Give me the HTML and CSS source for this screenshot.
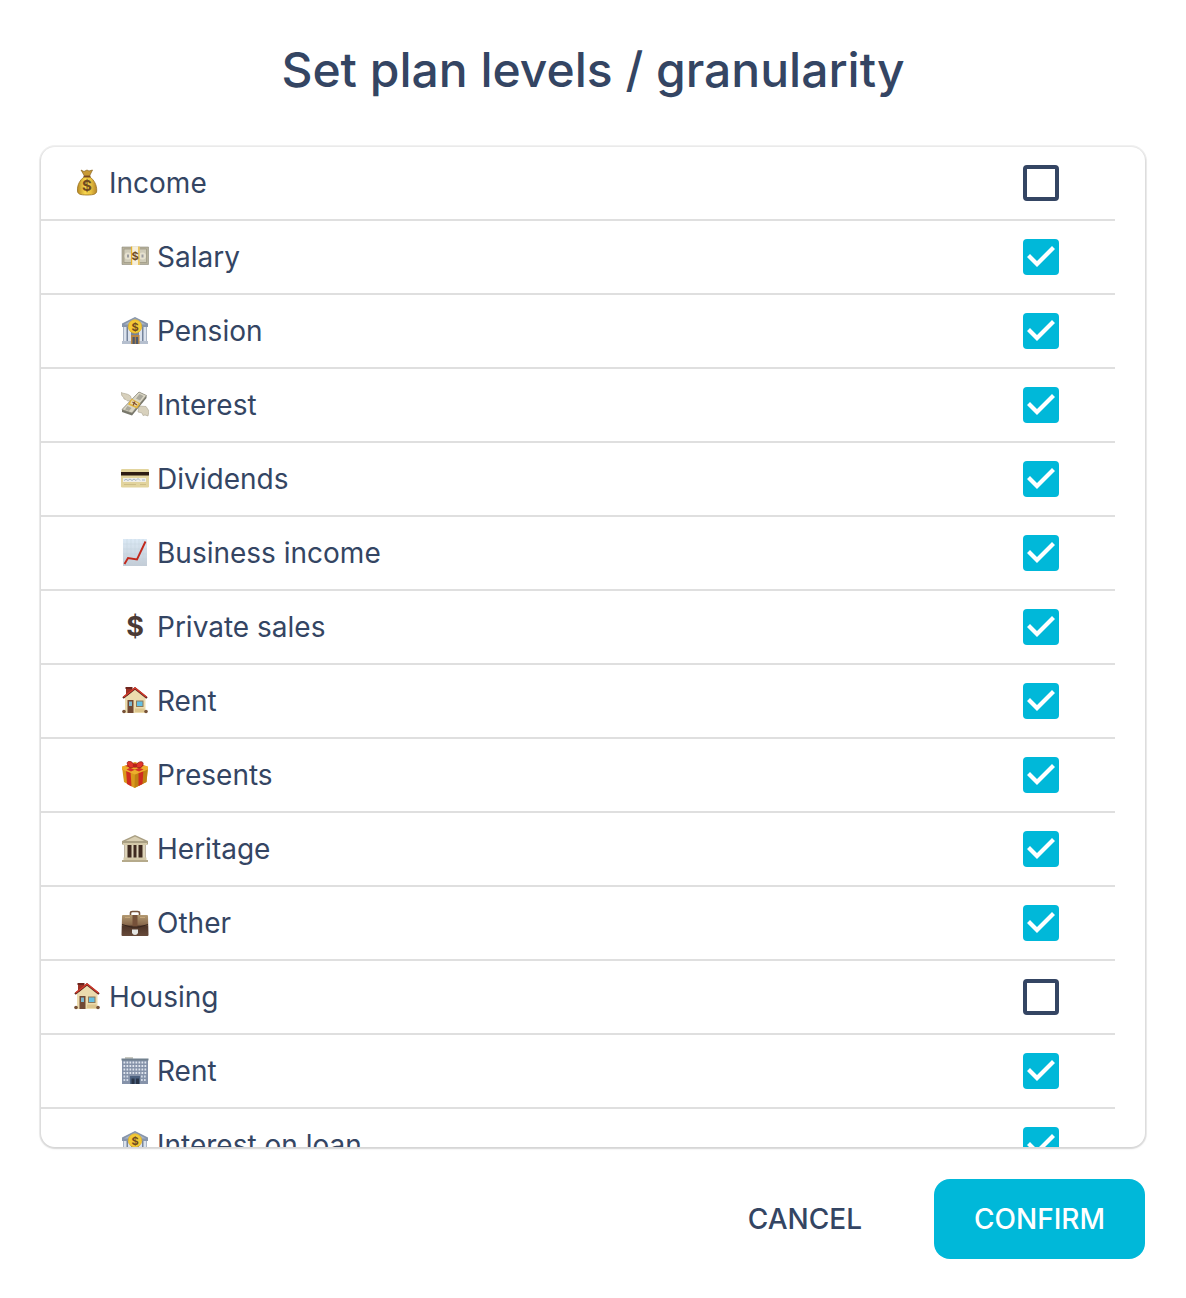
FILE: index.html
```html
<!DOCTYPE html>
<html lang="en">
	<head>
		<meta charset="utf-8">
		<meta name="viewport" content="width=device-width, initial-scale=1">
		<title>Set plan levels / granularity</title>
		<link rel="stylesheet" href="styles.css">
	</head>
	<body>
		<!-- gradients stay rendered, display: none would switch them off -->
		<svg class="gradients" aria-hidden="true">
			<linearGradient id="gold" x1="0" x2="1" y1="0" y2="0">
				<stop offset="0" stop-color="#b98a24"/>
				<stop offset=".4" stop-color="#f8d850"/>
				<stop offset=".7" stop-color="#e9c03f"/>
				<stop offset="1" stop-color="#b5862a"/>
			</linearGradient>
			<linearGradient id="leather" x1="0" x2="0" y1="0" y2="1">
				<stop offset="0" stop-color="#b39a72"/>
				<stop offset=".45" stop-color="#8a6a4d"/>
				<stop offset=".55" stop-color="#4f3528"/>
				<stop offset="1" stop-color="#664a3a"/>
			</linearGradient>
			<linearGradient id="paper" x1="0" x2="0" y1="0" y2="1">
				<stop offset="0" stop-color="#dbe9f5"/>
				<stop offset="1" stop-color="#c3ccd6"/>
			</linearGradient>
		</svg>
		<!-- category icons -->
		<svg class="sprite" aria-hidden="true">
			<symbol id="bag" viewBox="0 0 28 28">
				<path d="M8 1l3 1.500 3-1.500 2 1 3.500-1-3 6h-5z" fill="#c99a35" stroke="#8a6420" stroke-width=".7"/>
				<path d="M11 8C7 11 4 16 4.500 22c.2 3 2.500 4 9.500 4s9.500-1 9.700-4C24 16 21 11 17 8z" fill="url(#gold)" stroke="#99701f" stroke-width=".8"/>
				<path d="M10.500 7.500h7" stroke="#7b4a22" stroke-width="1.600"/>
				<text x="14" y="22" text-anchor="middle" class="coin-sign coin-sign-big">$</text>
			</symbol>
			<symbol id="cash" viewBox="0 0 28 28">
				<path d="M1 4h26.500v17.500H1z" fill="#b8b39d" stroke="#8d8a7b" stroke-width=".6"/>
				<path d="M3 6h22.500v13.500H3z" fill="#cfcbb8" stroke="#99947f" stroke-width=".7"/>
				<circle cx="7" cy="13" r="3.500" fill="#e6e1cf"/>
				<circle cx="21.500" cy="13" r="3.500" fill="#e6e1cf"/>
				<path d="M6 11.500h2v3H6zM20.500 11.500h2v3h-2z" fill="#9c9da0"/>
				<path d="M10 3.500h8.500V22H10z" fill="#f6efdc"/>
				<path d="M10 3.500h1.200V22H10zM17.300 3.500h1.200V22h-1.200z" fill="#e8b52d"/>
				<text x="14" y="17" text-anchor="middle" class="coin-sign">$</text>
			</symbol>
			<symbol id="bank" viewBox="0 0 28 28">
				<path d="M14 0l13 6.500V10H1V6.500z" fill="#8795ab"/>
				<path d="M14 1.500L25 7.500H3z" fill="#a9b5c6"/>
				<path d="M2 10h24v15H2z" fill="#75849c"/>
				<path d="M2.500 10h3v14h-3zM7 10h3v14H7zM18 10h3v14h-3zM22.500 10h3v14h-3z" fill="#dbe2ec"/>
				<path d="M1 24h26v3H1z" fill="#b5bfce"/>
				<path d="M10 18h8.500v9H10z" fill="#b98642"/>
				<path d="M11.500 20h2.300v7h-2.300zM14.800 20h2.300v7h-2.300z" fill="#4c596d"/>
				<circle cx="14" cy="9.500" r="6.800" fill="#f3c935" stroke="#dba81f" stroke-width=".6"/>
				<text x="14" y="13.500" text-anchor="middle" class="coin-sign">$</text>
			</symbol>
			<symbol id="flying" viewBox="0 0 28 28">
				<path d="M0 1.500c3 1.500 6 .5 9.500 3.500L11 10H6.500L5 8.500 3 8 2.500 6 1 5zM18 15l7 .5L28 20l-1 5-3-1-2 .500-1-2.500-4-1z" fill="#d8d1bd" stroke="#aaa28e" stroke-width=".6"/>
				<path d="M18 1l7.500 3.500v2.500L11 24.500 1 21v-2.500z" fill="#77766a"/>
				<path d="M18 1l7.500 3.500L11 22 1 18.500z" fill="#dad6c5" stroke="#8c897b" stroke-width=".7"/>
				<path d="M18.500 3l4 2-3.500 4.500-4-2zM6.500 15l4 2-2.500 3-4-1.500z" fill="#aaa89b"/>
				<path d="M10.500 7.500l9 5-3.500 5-9-4z" fill="#e3b53d"/>
				<path d="M11 9l6.500 3.500-2 3-6.500-3z" fill="#e8d7ac"/>
				<path d="M11.500 11l4.500 3M14 10.500l-2 4" stroke="#81502f" stroke-width="1.200"/>
			</symbol>
			<symbol id="card" viewBox="0 0 28 28">
				<rect y="4" width="28" height="18.500" rx="1.200" fill="#e2d49d"/>
				<path d="M0 7h28v3.500H0z" fill="#2c1b12"/>
				<path d="M2 13h23v4H2z" fill="#f1efe8"/>
				<path d="M3 15.500l2-1.200 2 1.200 2-1.500 2 1.500 2-1.500 2 1.500 2-2 2 2M21 15h3" fill="none" stroke="#8fa5bd" stroke-width=".8"/>
				<path d="M3 19.500h12M19 19.500h6" stroke="#cdbd86"/>
			</symbol>
			<symbol id="chart" viewBox="0 0 28 28">
				<path d="M2 0h24v27H2z" fill="url(#paper)"/>
				<path d="M6 0v27M10 0v27M14 0v27M18 0v27M22 0v27M2 5h24M2 10h24M2 15h24M2 20h24" stroke="#c3d0dc" stroke-width=".4"/>
				<path d="M3.500 25l3.500-6 9 1.500L24.500 2.500" fill="none" stroke="#c2281c" stroke-width="1.900"/>
			</symbol>
			<symbol id="dollar" viewBox="0 0 28 28">
				<text x="14" y="23" text-anchor="middle" class="dollar-sign">$</text>
			</symbol>
			<symbol id="house" viewBox="0 0 28 28">
				<path d="M5 0h6v9H5z" fill="#9c3024"/>
				<path d="M4.500 0h7v2h-7z" fill="#6d241d"/>
				<path d="M14 2L4 10.500V26h20.500V10.500z" fill="#ecdcae"/>
				<path d="M2 11L14 1.500 26 11" fill="none" stroke="#5c241e" stroke-width="2.200"/>
				<path d="M2.500 10L14 1l11.500 9" fill="none" stroke="#d53a2b" stroke-width="1.500"/>
				<path d="M6.500 13h6v13h-6z" fill="#704833"/>
				<path d="M8 14.500h3V19H8z" fill="#7cb7cf"/>
				<path d="M15 13.500h7.500V20H15z" fill="#8c795a"/>
				<path d="M16 14.500h5.500V19H16z" fill="#63bfe3"/>
				<path d="M14 21.500h9.500V25H14z" fill="#dcc58d"/>
				<circle cx="3" cy="24.500" r="1.800" fill="#765238"/>
				<circle cx="25" cy="24.500" r="1.800" fill="#765238"/>
			</symbol>
			<symbol id="gift" viewBox="0 0 28 28">
				<path d="M1 6l13-5 13 5-1.500 15L13.500 27 3 21z" fill="#d99a1c"/>
				<path d="M14 10l13-4-1.500 15-12 6z" fill="#c08212"/>
				<path d="M5 8l4.500 1.500 1 16L6 23zM17.500 9l5-1.500L21.500 23l-4 2z" fill="#cf2c20"/>
				<path d="M1 5.500l13-4 13 4v3l-13 5-13-5z" fill="#edaf2c"/>
				<path d="M4.500 5l5-2 13 5.500-4.500 2zM23 4.500l-5-2L5.500 8.500 10 10.500z" fill="#d63226"/>
				<path d="M14 5C10-2 5 0 6.500 3.500S10 8 14 5c4-6 9-5 8-1.500S18 8 14 5z" fill="#e2362a" stroke="#8e1c19" stroke-width=".8"/>
				<circle cx="14" cy="4.500" r="2.200" fill="#b7211d"/>
			</symbol>
			<symbol id="temple" viewBox="0 0 28 28">
				<path d="M14 0l13 6v3.500H1V6z" fill="#a99f83"/>
				<path d="M14 1.500l9.500 4.500h-19z" fill="#d9cfb2"/>
				<path d="M3.500 9.500h21V24h-21z" fill="#3f2a20"/>
				<path d="M3.500 9.500h3V24h-3zM10.500 9.500h2V24h-2zM15.500 9.500h2V24h-2zM21.500 9.500h3V24h-3z" fill="#ddd3b8"/>
				<path d="M2 8h24v2H2zM2.500 22.500h23V25h-23z" fill="#d4c9a9"/>
				<path d="M1 25h26v2H1z" fill="#b5aa8b"/>
			</symbol>
			<symbol id="briefcase" viewBox="0 0 28 28">
				<path d="M9.500 7V4q0-1.500 2-1.500h5q2 0 2 1.500v3" fill="none" stroke="#77543e" stroke-width="1.600"/>
				<path d="M2 6h24q1 0 1 1l.5 19q0 1-1 1h-25q-1 0-1-1L1 7q0-1 1-1z" fill="url(#leather)"/>
				<path d="M11.500 6h5v12h-5z" fill="#76513a"/>
				<path d="M1 15.500l9 2.500h8l9-2.500" fill="none" stroke="#37251d"/>
				<path d="M11 20.500h6v3.500q-1 2-3 2t-3-2z" fill="#e5e6e3"/>
				<path d="M4 8.500h5M19 8.500h5" stroke="#c5a679"/>
			</symbol>
			<symbol id="office" viewBox="0 0 28 28">
				<path d="M4 0h8v3H4z" fill="#c9c9c1"/>
				<path d="M1 2h26v25H1z" fill="#8592a9"/>
				<path d="M.5 1.500h27v2H.5z" fill="#71808e"/>
				<path d="M2.500 5.500h23M2.500 9h23M2.500 12.500h23M2.500 16h23" stroke="#e0e6ef" stroke-width="2" stroke-dasharray="1.700 1.300"/>
				<path d="M2.500 19.500h6M20 19.500h6M2.500 23h6M20 23h6" stroke="#d2dae6" stroke-width="2" stroke-dasharray="1.700 1.300"/>
				<path d="M9 19h10v8H9z" fill="#4c617f"/>
				<path d="M10.500 21.500h3V27h-3zM15 21.500h3V27h-3z" fill="#293548"/>
			</symbol>
		</svg>

		<form class="dialog">
			<h1>Set plan levels / granularity</h1>
			<ul class="levels">
				<li><label for="income"><svg class="icon"><use href="#bag"/></svg>Income</label><input type="checkbox" id="income"></li>
				<li class="sub"><label for="salary"><svg class="icon"><use href="#cash"/></svg>Salary</label><input type="checkbox" id="salary" checked></li>
				<li class="sub"><label for="pension"><svg class="icon"><use href="#bank"/></svg>Pension</label><input type="checkbox" id="pension" checked></li>
				<li class="sub"><label for="interest"><svg class="icon"><use href="#flying"/></svg>Interest</label><input type="checkbox" id="interest" checked></li>
				<li class="sub"><label for="dividends"><svg class="icon"><use href="#card"/></svg>Dividends</label><input type="checkbox" id="dividends" checked></li>
				<li class="sub"><label for="business"><svg class="icon"><use href="#chart"/></svg>Business income</label><input type="checkbox" id="business" checked></li>
				<li class="sub"><label for="sales"><svg class="icon"><use href="#dollar"/></svg>Private sales</label><input type="checkbox" id="sales" checked></li>
				<li class="sub"><label for="rent-income"><svg class="icon"><use href="#house"/></svg>Rent</label><input type="checkbox" id="rent-income" checked></li>
				<li class="sub"><label for="presents"><svg class="icon"><use href="#gift"/></svg>Presents</label><input type="checkbox" id="presents" checked></li>
				<li class="sub"><label for="heritage"><svg class="icon"><use href="#temple"/></svg>Heritage</label><input type="checkbox" id="heritage" checked></li>
				<li class="sub"><label for="other"><svg class="icon"><use href="#briefcase"/></svg>Other</label><input type="checkbox" id="other" checked></li>
				<li><label for="housing"><svg class="icon"><use href="#house"/></svg>Housing</label><input type="checkbox" id="housing"></li>
				<li class="sub"><label for="rent"><svg class="icon"><use href="#office"/></svg>Rent</label><input type="checkbox" id="rent" checked></li>
				<li class="sub"><label for="loan"><svg class="icon"><use href="#bank"/></svg>Interest on loan</label><input type="checkbox" id="loan" checked></li>
			</ul>
			<div class="actions">
				<button type="button">CANCEL</button>
				<button type="submit" class="primary">CONFIRM</button>
			</div>
		</form>
	</body>
</html>
```

FILE: styles.css
```css
* {
	box-sizing: border-box;
}
body {
	margin: 0;
	background: #fff;
	color: #344563;
	font-family: Inter, "Liberation Sans", sans-serif;
	font-size: 28px;
}
.gradients {
	position: absolute;
	width: 0;
	height: 0;
}
.sprite {
	display: none;
}
.dialog {
	display: flex;
	flex-direction: column;
	height: 100vh;
	padding: 40px 41px 39px;
}
h1 {
	margin: 0 0 47px;
	font-size: 48px;
	font-weight: 500;
	line-height: 60px;
	text-align: center;
}
.levels {
	flex: 1;
	min-height: 0;
	margin: 0;
	padding: 0 30px 0 0;
	list-style: none;
	overflow-y: auto;
	scrollbar-width: none;
	border-radius: 14px;
	box-shadow: 0 1px 2px 1px rgba(0, 0, 0, .12), 0 0 0 2px #f2f2f2;
}
.levels li {
	display: flex;
	align-items: center;
	height: 74px;
	padding: 0 56px 0 32px;
	border-bottom: 2px solid #dfdfdf;
}
.levels .sub {
	padding-left: 80px;
}
label {
	display: flex;
	flex: 1;
	align-items: center;
	gap: 8px;
	line-height: 36px;
}
.icon {
	width: 28px;
	height: 28px;
}
.coin-sign {
	fill: #704a20;
	font-size: 11px;
	font-weight: 700;
}
.coin-sign-big {
	font-size: 15px;
}
.dollar-sign {
	fill: #4b3a35;
	font-size: 27px;
	font-weight: 700;
}
input {
	appearance: none;
	width: 36px;
	height: 36px;
	margin: 0;
	border: 4px solid #344563;
	border-radius: 4px;
}
input:checked {
	border: 0;
	background: #00b8d9;
}
input:checked::before {
	content: "";
	display: block;
	height: 36px;
	background: #fff;
	clip-path: polygon(4px 18px, 7px 15px, 14px 22px, 29px 7px, 32px 10px, 14px 28px);
}
.actions {
	display: flex;
	justify-content: flex-end;
	gap: 32px;
	margin-top: 32px;
}
button {
	height: 80px;
	padding: 0 40px;
	border: 0;
	border-radius: 16px;
	background: none;
	color: inherit;
	font: inherit;
	font-weight: 500;
}
.primary {
	background: #00b8d9;
	color: #fff;
}
```
